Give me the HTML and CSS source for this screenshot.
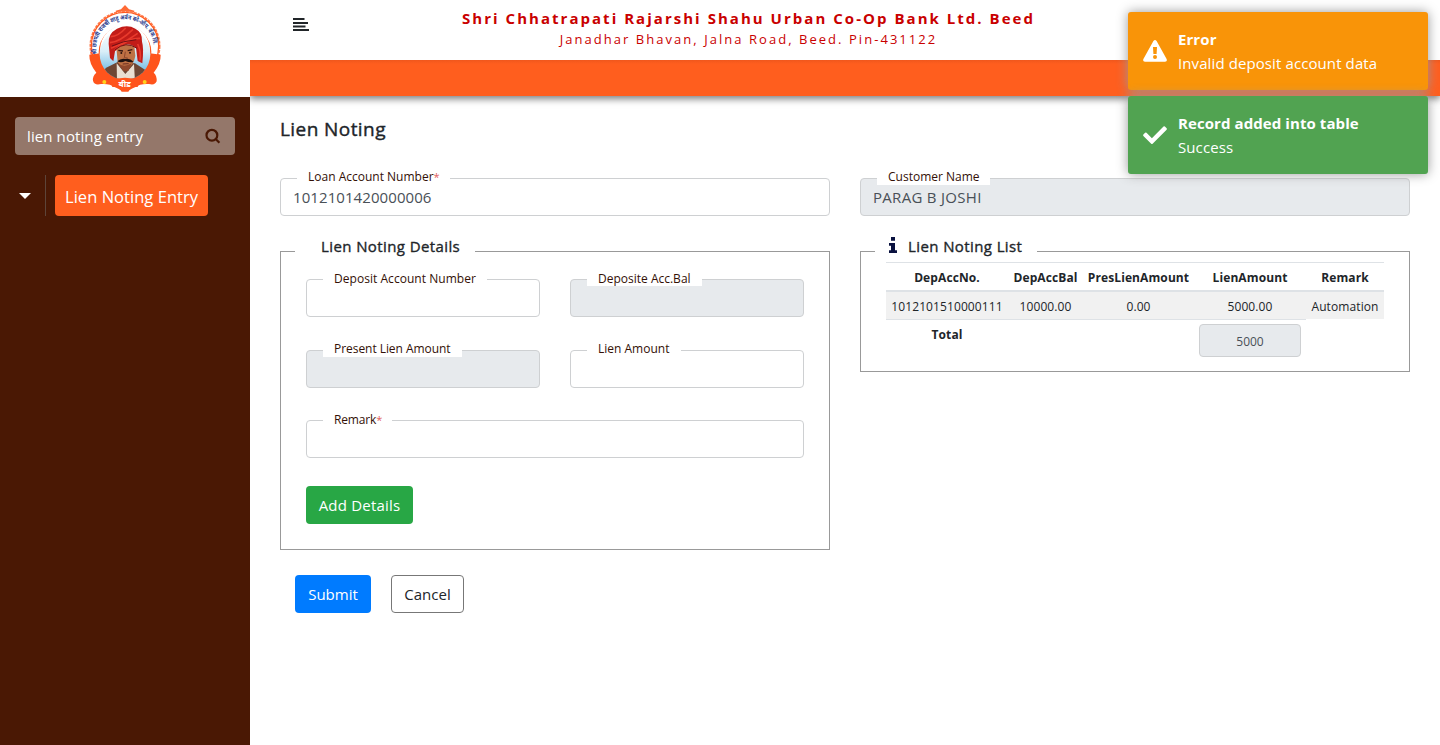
FILE: index.html
```html
<!DOCTYPE html>
<html lang="en">
<head>
<meta charset="utf-8">
<title>Lien Noting</title>
<link rel="stylesheet" href="styles.css">
</head>
<body>
<div class="app">
  <aside class="sidebar">
    <div class="brand">
      <svg class="logo" viewBox="0 0 300 300" width="100" height="100">
        <defs>
          <path id="arc" d="M66 162 A86 86 0 1 1 235 158"/>
          <clipPath id="portrait"><circle cx="150" cy="163" r="76"/></clipPath>
          <linearGradient id="sky" x1="0" y1="0" x2="0" y2="1"><stop offset="0" stop-color="#fff"/><stop offset=".45" stop-color="#d9eef8"/><stop offset="1" stop-color="#3fa3dd"/></linearGradient>
        </defs>
        <path d="M122 32 L138 28 L150 15 L162 28 L178 32 L176 42 L124 42Z" fill="#ff6a35"/>
        <circle cx="150" cy="138" r="104" fill="#fff" stroke="#ff7a4a" stroke-width="5" stroke-dasharray="9 3"/>
        <circle cx="150" cy="138" r="101" fill="#fff" stroke="#ff5a1f" stroke-width="4"/>
        <path d="M43 164 L75 160 L225 160 L257 164 Q258 190 236 218 Q246 226 245 244 Q240 257 222 252 Q196 250 180 262 Q165 267 160 275 L140 275 Q135 267 120 262 Q104 250 78 252 Q58 257 54 242 Q52 228 64 218 Q42 190 43 164Z" fill="#ff541c"/>
        <circle cx="150" cy="156" r="79" fill="#ff541c"/>
        <circle cx="150" cy="150" r="75" fill="#fff"/>
        <g clip-path="url(#portrait)">
          <rect x="70" y="80" width="160" height="165" fill="url(#sky)"/>
          <path d="M74 245 L92 204 L128 186 L180 190 L211 210 L224 245Z" fill="#6e4634"/>
          <path d="M125 190 L151 222 L177 192 L180 245 L126 245Z" fill="#eadfd2"/>
          <path d="M124 143 Q124 132 148 132 L178 138 L181 168 Q176 197 155 207 Q140 208 128 186Z" fill="#be7144"/>
          <path d="M128 188 Q145 205 170 190 L160 213 L145 213Z" fill="#8f482c"/>
        </g>
        <path d="M101 132 Q98 101 126 86 Q157 72 181 86 Q203 97 201 125 Q207 143 202 190 L188 183 L183 143 Q151 118 120 154 L115 184 L105 174Z" fill="#c21c18"/>
        <path d="M105 128 Q135 126 174 88 M108 145 Q145 130 188 100 M119 151 Q157 113 195 115 M188 132 Q199 156 195 181 M107 110 Q130 109 152 84" fill="none" stroke="#e83a2c" stroke-width="5"/>
        <path d="M119 150 Q153 121 186 145 M111 138 Q145 122 184 119" fill="none" stroke="#701014" stroke-width="3"/>
        <path d="M130 151 L144 153 M158 152 L172 149" stroke="#351611" stroke-width="4"/>
        <circle cx="139" cy="159" r="3" fill="#28130f"/><circle cx="165" cy="158" r="3" fill="#28130f"/>
        <path d="M151 155 L148 173 L158 174" fill="none" stroke="#8c452c" stroke-width="3"/>
        <path d="M127 184 Q137 174 151 177 Q164 173 176 186 Q163 188 151 183 Q138 190 127 184Z" fill="#1d1110"/>
        <path d="M143 192 L161 191" stroke="#672a20" stroke-width="3"/>
        <path d="M105 241 Q150 226 195 241 L188 261 L112 261Z" fill="#ff541c"/>
        <circle cx="88" cy="246" r="6" fill="#ffd21c"/><circle cx="209" cy="246" r="6" fill="#ffd21c"/>
        <text class="ring-text"><textPath href="#arc" textLength="278" lengthAdjust="spacingAndGlyphs">श्री छत्रपती राजर्षी शाहू अर्बन को-ऑप. बँक लि.</textPath></text>
        <text class="city-text" x="149" y="261" text-anchor="middle">बीड</text>
      </svg>
    </div>
    <div class="search">
      <input class="search-input" type="text" value="lien noting entry">
      <svg class="search-icon" viewBox="0 0 16 16" width="16" height="16"><circle cx="6.9" cy="7.2" r="5.4"/><path d="M10.9 11.2 L14.4 14.7"/></svg>
    </div>
    <nav class="menu">
      <span class="caret"></span>
      <a class="menu-item">Lien Noting Entry</a>
    </nav>
  </aside>
  <div class="page">
    <header class="topbar">
      <svg class="toggle" viewBox="0 0 16 13" width="16" height="13"><path d="M0 0H11.5V2H0zM0 4H15V6H0zM0 7.4H12.5V9.4H0zM0 11H16V13H0z"/></svg>
      <div class="bank">
        <div class="bank-name">Shri Chhatrapati Rajarshi Shahu Urban Co-Op Bank Ltd. Beed</div>
        <div class="bank-address">Janadhar Bhavan, Jalna Road, Beed. Pin-431122</div>
      </div>
    </header>
    <div class="ribbon"></div>
    <main class="content">
      <h5 class="title">Lien Noting</h5>
      <div class="columns">
        <div class="field"><label class="label loan">Loan Account Number<span class="req">*</span></label><input class="control acc" type="text" value="1012101420000006"></div>
        <div class="field"><label class="label cust">Customer Name</label><input class="control cust-name" type="text" value="PARAG B JOSHI" disabled></div>
      </div>
      <div class="columns panels">
        <section class="panel details">
          <h6 class="legend legend-details">Lien Noting Details</h6>
          <div class="form-grid">
            <div class="field"><label class="label low dep">Deposit Account Number</label><input class="control" type="text"></div>
            <div class="field"><label class="label low bal">Deposite Acc.Bal</label><input class="control" type="text" disabled></div>
            <div class="field"><label class="label pres">Present Lien Amount</label><input class="control" type="text" disabled></div>
            <div class="field"><label class="label amt">Lien Amount</label><input class="control" type="text"></div>
            <div class="field wide"><label class="label low rem">Remark<span class="req">*</span></label><input class="control" type="text"></div>
          </div>
          <button class="btn add">Add Details</button>
        </section>
        <section class="panel list">
          <h6 class="legend legend-list"><svg class="info" viewBox="0 0 8 16" width="8" height="16"><path d="M2 0H6V3.8H2zM0 6H6V13.2H8V16H0V13.2H2V8.8H0z"/></svg><span>Lien Noting List</span></h6>
          <table class="table">
            <colgroup><col class="c1"><col class="c2"><col class="c3"><col class="c4"><col class="c5"></colgroup>
            <thead><tr><th>DepAccNo.</th><th>DepAccBal</th><th>PresLienAmount</th><th>LienAmount</th><th>Remark</th></tr></thead>
            <tbody>
              <tr class="row"><td>1012101510000111</td><td>10000.00</td><td>0.00</td><td>5000.00</td><td>Automation</td></tr>
              <tr class="total"><td><b>Total</b></td><td></td><td></td><td><input class="sum" type="text" value="5000" disabled></td></tr>
            </tbody>
          </table>
        </section>
      </div>
      <div class="actions">
        <button class="btn submit">Submit</button>
        <button class="btn cancel">Cancel</button>
      </div>
    </main>
  </div>
</div>
<div class="toasts">
  <div class="toast warning">
    <svg class="toast-icon" viewBox="0 0 24 24" width="24" height="24"><path fill-rule="evenodd" d="M10.4 2.1Q12 -.3 13.6 2.1L23.6 20Q24.6 22.6 22 22.8H2Q-.6 22.6.4 20zM10 8.1L10.4 15H13.6L14 8.1zM12 16.1a2 2 0 1 0 0 4a2 2 0 1 0 0-4z"/></svg>
    <div><div class="toast-title">Error</div><div class="toast-text">Invalid deposit account data</div></div>
  </div>
  <div class="toast success">
    <svg class="toast-icon" viewBox="0 0 24 24" width="24" height="24"><path d="M8.2 20.7L.4 12.9Q-.2 12.2.4 11.5L2.1 9.8Q2.8 9.2 3.5 9.8L8.9 15.2L20.5 3.6Q21.2 3 21.9 3.6L23.6 5.3Q24.2 6 23.6 6.7L9.6 20.7Q8.9 21.3 8.2 20.7z"/></svg>
    <div><div class="toast-title">Record added into table</div><div class="toast-text">Success</div></div>
  </div>
</div>
</body>
</html>
```
FILE: styles.css
```css
*{box-sizing:border-box}
body{margin:0;font-family:"Open Sans","Noto Sans",sans-serif;font-size:15px;line-height:24px;color:#212529;background:#fff}
input,button{font-family:inherit;margin:0}
.app{display:flex;height:745px;overflow:hidden}
.sidebar{width:250px;flex:none;background:#4a1804;color:#fff}
.brand{height:97px;background:#fff;padding-left:75px;overflow:hidden}
.logo{display:block}
.ring-text{font:bold 19px "Noto Sans","Noto Sans Devanagari",sans-serif;fill:#26388c}
.city-text{font:bold 25px "Noto Sans","Noto Sans Devanagari",sans-serif;fill:#fff}
.search{margin:20px 15px 0;height:38px;border-radius:4px;background:#94776a;display:flex;align-items:center;padding:0 14px 0 12px}
.search-input{flex:1;min-width:0;border:0;background:none;padding:0;color:#fff;font-size:15px;letter-spacing:.1px}
.search-icon{fill:none;stroke:#4a1804;stroke-width:2.2}
.menu{display:flex;margin:20px 0 0 19px;height:41px;align-items:center}
.caret{border:6px solid transparent;border-top:6px solid #fff;border-bottom:0;width:0;height:0;margin-right:14px}
.menu-item{height:41px;background:#ff5e1e;border-radius:4px;width:153px;padding-left:10px;line-height:43px;font-size:16.5px;letter-spacing:.04px;white-space:nowrap;margin-left:10px;position:relative}
.menu-item::before{content:"";position:absolute;left:-10px;top:0;height:41px;width:1px;background:#5d4439}
.page{flex:1;min-width:0}
.topbar{height:60px;position:relative;display:flex;justify-content:center}
.toggle{position:absolute;left:43px;top:18px;fill:#212529}
.bank{width:600px;text-align:center;color:#c90000;white-space:nowrap;margin-right:193px}
.bank-name{font-weight:700;font-size:15px;letter-spacing:2.03px;line-height:20px;padding-top:8px}
.bank-address{font-size:13px;letter-spacing:2.04px;line-height:20px;padding-top:1px}
.ribbon{height:36px;background:linear-gradient(#f0571c,#ff5e1e 4px);box-shadow:0 3px 7px rgba(0,0,0,.5);clip-path:inset(0 0 -15px 0)}
.content{padding:21px 30px 0}
.title{margin:0;font-size:19px;line-height:24px;font-weight:400;letter-spacing:.42px;-webkit-text-stroke:.4px #212529}
.columns{display:grid;grid-template-columns:550px 550px;gap:30px;margin-top:37px;align-items:start}
.field{position:relative;height:38px}
.control{display:block;width:100%;height:38px;border:1px solid #ced0d2;border-radius:4px;padding:0 12px;font-size:15px;color:#495057;background:#fff}
.control:disabled{background:#e7eaed;color:#495057;opacity:1}
.acc{letter-spacing:.08px}
.cust-name{letter-spacing:.3px}
.label{position:absolute;left:17px;top:-9px;height:16px;line-height:15px;padding-left:11px;background:#fff;font-size:12px;color:#331006;white-space:nowrap}
.low{line-height:17px}
.req{color:#e2605c;font-size:11px}
.loan{width:153px}
.cust{width:113px}
.dep{width:164px;letter-spacing:.04px}
.bal{width:115px}
.pres{width:139px;letter-spacing:-.05px}
.amt{width:94px}
.rem{width:69px;letter-spacing:-.15px}
.panels{margin-top:35px}
.panel{border:1px solid #999;position:relative}
.details{height:299px;padding:27px 25px 0}
.list{height:121px;padding:10px 25px 0}
.legend{position:absolute;left:14px;top:-18px;margin:0;height:24px;line-height:24px;background:#fff;font-size:15px;font-weight:400;letter-spacing:.4px;-webkit-text-stroke:.35px #212529;white-space:nowrap}
.legend-details{width:180px;padding-left:26px}
.legend-list{width:162px;padding-left:14px;display:flex;gap:11px}
.info{fill:#09113f;margin-top:3px}
.form-grid{display:grid;grid-template-columns:234px 234px;gap:33px 30px}
.wide{grid-column:1/3;margin-top:-1px}
.btn{display:block;height:38px;border:0;border-radius:4px;color:#fff;font-size:15px;padding:0;white-space:nowrap}
.add{width:107px;background:#28a745;margin-top:28px;letter-spacing:.2px}
.actions{display:flex;gap:20px;margin:25px 0 0 15px}
.submit{width:76px;background:#007bff}
.cancel{width:73px;background:#fff;border:1px solid #777;color:#212529}
.table{width:498px;table-layout:fixed;border-collapse:separate;border-spacing:0;font-size:12px;line-height:20px;letter-spacing:.1px;text-align:center;white-space:nowrap}
.c1{width:122px}
.c2{width:75px}
.c3{width:111px}
.c4{width:112px}
.c5{width:78px}
.table th{height:30px;padding:2px 0 0;border-top:1px solid #dee2e6;border-bottom:2px solid #dee2e6}
.table td{padding:0}
.row td{height:27px;background:#f1f1f1;padding-top:2px}
.total td{border-top:1px solid #dee2e6;height:38px;padding-top:4px;vertical-align:top}
.total b{display:block;padding-top:1px}
.sum{display:block;margin:0 auto;width:102px;height:33px;border:1px solid #ced0d2;border-radius:4px;background:#e7eaed;color:#495057;text-align:center;font-size:12px;padding:2px 0 0}
.toasts{position:absolute;left:1128px;top:12px;width:300px;display:grid;gap:6px}
.toast{height:78px;border-radius:3px;box-shadow:0 0 12px #999;color:#fff;padding:15px;display:flex;align-items:center;gap:11px;white-space:nowrap}
.warning{background:#f99408}
.success{background:#51a351}
.toast-icon{fill:#fff}
.toast-title{font-weight:700;letter-spacing:.08px}
.toast-text{letter-spacing:.1px}
```
